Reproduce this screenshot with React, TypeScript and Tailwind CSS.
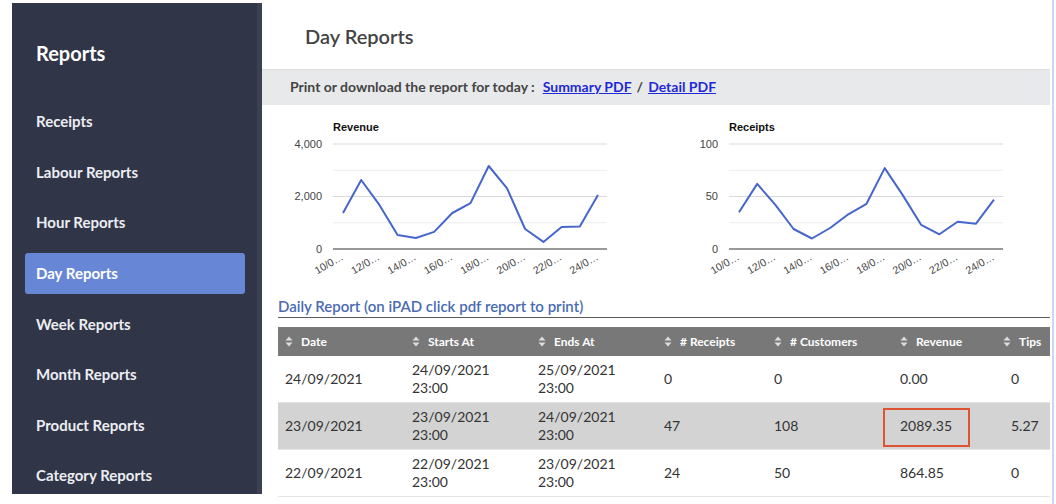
import React from "react";

const navItems = [
  "Receipts",
  "Labour Reports",
  "Hour Reports",
  "Day Reports",
  "Week Reports",
  "Month Reports",
  "Product Reports",
  "Category Reports",
];

const revenue = [1370, 2630, 1680, 530, 420, 650, 1370, 1750, 3160, 2320, 760, 270, 840, 860, 2057];
const receipts = [35, 62, 42, 19, 10, 20, 33, 43, 77, 51, 23, 14, 26, 24, 47];
const xLabels = ["10/0…", "12/0…", "14/0…", "16/0…", "18/0…", "20/0…", "22/0…", "24/0…"];

function Chart({
  title,
  data,
  max,
  ticks,
  left,
  width,
  labelX,
}: {
  title: string;
  data: number[];
  max: number;
  ticks: string[];
  left: number;
  width: number;
  labelX: number;
}) {
  const top = 39;
  const base = 144;
  const right = left + 274;
  const x0 = left + 10;
  const step = (right - 9 - x0) / (data.length - 1);
  const pts = data
    .map((v, i) => `${(x0 + i * step).toFixed(1)},${(base - (v / max) * (base - top)).toFixed(1)}`)
    .join(" ");
  const grid = [0, 1, 2, 3, 4].map((i) => top + i * ((base - top) / 4));
  return (
    <svg width={width} height={186} style={{ fontFamily: "'Liberation Sans', Arial, sans-serif" }}>
      <text x={left} y={25.5} fontSize={11} fontWeight={700} fill="#111">
        {title}
      </text>
      {grid.slice(0, 4).map((y, i) => (
        <line key={i} x1={left} x2={right} y1={y} y2={y} stroke={i % 2 === 0 ? "#d9d9d9" : "#ececec"} strokeWidth={1} />
      ))}
      <line x1={left} x2={right} y1={base} y2={base} stroke="#333" strokeWidth={1} />
      <text x={labelX} y={top + 3.5} fontSize={11} fill="#444" textAnchor="end">
        {ticks[0]}
      </text>
      <text x={labelX} y={grid[2] + 3.5} fontSize={11} fill="#444" textAnchor="end">
        {ticks[1]}
      </text>
      <text x={labelX} y={base + 3.5} fontSize={11} fill="#444" textAnchor="end">
        {ticks[2]}
      </text>
      <polyline points={pts} fill="none" stroke="#4666cc" strokeWidth={2} strokeLinejoin="round" />
      {xLabels.map((l, i) => {
        const x = x0 + i * 2 * step + 1;
        const y = base + 10;
        return (
          <text key={l} x={x} y={y} fontSize={10.5} fill="#444" textAnchor="end" transform={`rotate(-30 ${x} ${y})`}>
            {l}
          </text>
        );
      })}
    </svg>
  );
}

function SortIcon() {
  return (
    <svg width="8" height="11" viewBox="0 0 8 11" className="shrink-0">
      <path d="M4 0.5 L7.5 4.5 L0.5 4.5 Z" fill="#dcdcdc" />
      <path d="M4 10.5 L7.5 6.5 L0.5 6.5 Z" fill="#dcdcdc" />
    </svg>
  );
}

const cols = [
  { name: "Date", w: "w-[127px]" },
  { name: "Starts At", w: "w-[126px]" },
  { name: "Ends At", w: "w-[126px]" },
  { name: "# Receipts", w: "w-[110px]" },
  { name: "# Customers", w: "w-[126px]" },
  { name: "Revenue", w: "w-[103px]" },
  { name: "Tips", w: "w-[80px]" },
];

const rows = [
  { d: "24/09/2021", s: "24/09/2021", e: "25/09/2021", r: "0", c: "0", rev: "0.00", t: "0", bg: "bg-white" },
  { d: "23/09/2021", s: "23/09/2021", e: "24/09/2021", r: "47", c: "108", rev: "2089.35", t: "5.27", bg: "bg-[#d3d3d3]", mark: true },
  { d: "22/09/2021", s: "22/09/2021", e: "23/09/2021", r: "24", c: "50", rev: "864.85", t: "0", bg: "bg-white" },
];

export default function App() {
  return (
    <div className="w-[1056px] h-[504px] bg-white flex overflow-hidden font-['Lato','Noto_Sans',sans-serif]">
      <div className="pl-[12px] pt-[3px]">
        <div className="w-[250px] h-[491px] bg-[#303547] flex">
          <div className="flex-1 flex flex-col">
            <div className="pt-[35px] pl-[24px] text-[20px] leading-[30px] font-bold text-white">Reports</div>
            <nav className="mt-[33px] flex flex-col gap-[9.6px]">
              {navItems.map((n) => (
                <div
                  key={n}
                  className={
                    n === "Day Reports"
                      ? "ml-[13px] w-[220px] h-[41px] flex items-center pl-[11px] rounded-[3px] bg-[#6787d6] text-white text-[15px] font-bold"
                      : "h-[41px] flex items-center pl-[24px] text-[#eceef3] text-[15px] font-bold"
                  }
                >
                  {n}
                </div>
              ))}
            </nav>
          </div>
          <div className="w-[5px] bg-[#3b4053]" />
        </div>
      </div>

      <div className="w-[788px] flex flex-col">
        <div className="h-[69px] flex items-center pl-[43px] pt-[3px] text-[20px] text-[#434343] font-semibold">
          Day Reports
        </div>
        <div className="h-[36px] bg-[#e8e9eb] border-t border-[#dcdcdf] flex items-center pl-[28px] pb-[3px] text-[14px] font-bold text-[#444]">
          <span>Print or download the report for today :</span>
          <a className="ml-[8px] text-[#1f29d6] underline">Summary PDF</a>
          <span className="mx-[5px]">/</span>
          <a className="text-[#1f29d6] underline">Detail PDF</a>
        </div>
        <div className="h-[185px] flex pl-[28px] gap-[30px]">
          <Chart title="Revenue" data={revenue} max={4000} ticks={["4,000", "2,000", "0"]} left={43} width={360} labelX={32} />
          <Chart title="Receipts" data={receipts} max={100} ticks={["100", "50", "0"]} left={49} width={350} labelX={38} />
        </div>
        <div className="ml-[16px] h-[28px] border-b border-[#5a5a5a] flex items-center pt-[5px] text-[15px] font-semibold text-[#4a6bb3]">
          Daily Report (on iPAD click pdf report to print)
        </div>
        <div className="ml-[16px] mt-[9px] overflow-hidden">
          <div className="w-[800px]">
            <div className="flex h-[29px] bg-[#787878] text-white text-[12px] font-bold">
              {cols.map((c) => (
                <div key={c.name} className={`${c.w} flex items-center gap-[8px] pl-[7px]`}>
                  <SortIcon />
                  <span>{c.name}</span>
                </div>
              ))}
            </div>
            {rows.map((r, i) => (
              <div key={i} className={`flex h-[47px] ${r.bg} text-[14px] leading-[18px] text-[#333] border-b border-[#e4e4e4]`}>
                <div className="w-[127px] flex items-center pl-[7px]">{r.d}</div>
                <div className="w-[126px] flex flex-col justify-center pl-[7px]">
                  <span>{r.s}</span>
                  <span>23:00</span>
                </div>
                <div className="w-[126px] flex flex-col justify-center pl-[7px]">
                  <span>{r.e}</span>
                  <span>23:00</span>
                </div>
                <div className="w-[110px] flex items-center pl-[7px]">{r.r}</div>
                <div className="w-[126px] flex items-center pl-[7px]">{r.c}</div>
                <div className="w-[103px] flex items-center pl-[7px] relative">
                  {r.rev}
                  {r.mark && (
                    <div className="absolute left-[-10px] top-[5px] w-[87px] h-[39px] border-2 border-[#dd5334]" />
                  )}
                </div>
                <div className="w-[80px] flex items-center pl-[15px]">{r.t}</div>
              </div>
            ))}
          </div>
        </div>
      </div>
      <div className="w-[2px]" />
      <div className="w-[2px] h-full bg-[#c9d7f6]" />
    </div>
  );
}
